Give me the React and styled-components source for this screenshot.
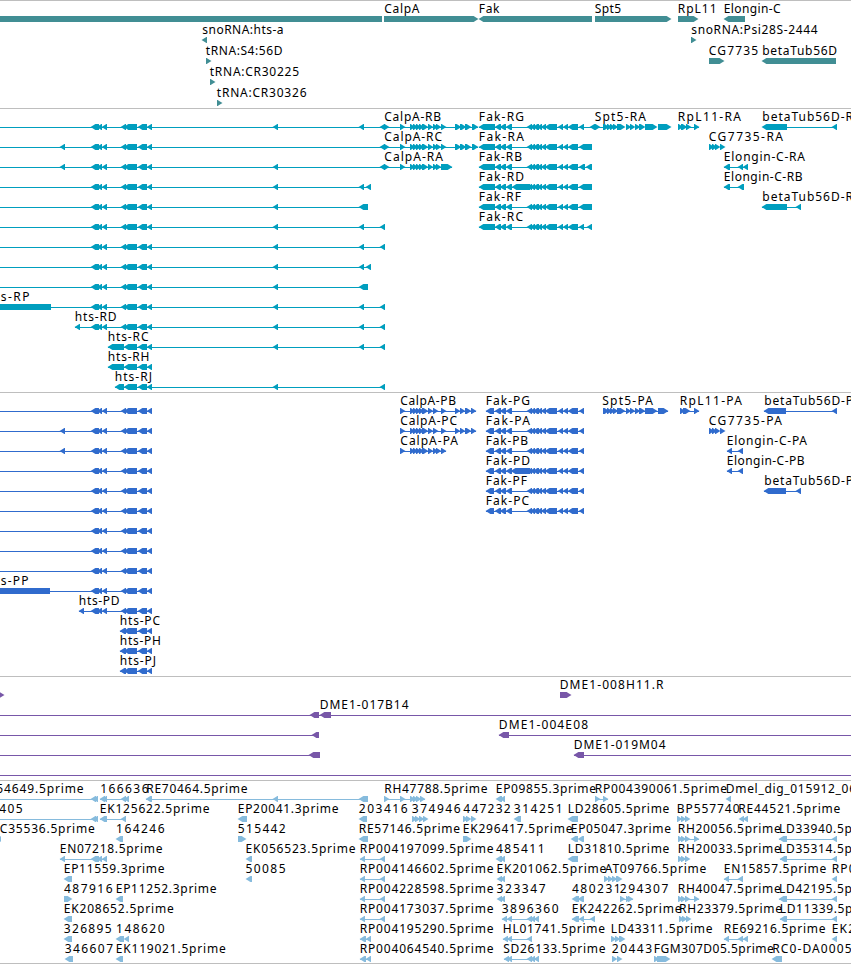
import styled, { createGlobalStyle } from "styled-components";

const GlobalStyle = createGlobalStyle`
  body {
    margin: 0;
    background-color: #ffffff;
    overflow: hidden;
  }
`;

const Browser = styled.main`
  display: flex;
  flex-direction: column;
  width: 851px;
  height: 964px;
  overflow: hidden;
  border-bottom: 1px solid #bebebe;
  box-sizing: border-box;
`;

const TrackSection = styled.section`
  display: flex;
  flex-direction: column;
  flex-shrink: 0;
  height: ${(props) => props.$height}px;
  box-sizing: border-box;
  border-top: 1px solid #bebebe;
  color: ${(props) => props.$color};
`;

const RowCanvas = styled.svg`
  display: block;
  flex-shrink: 0;
  width: 851px;
  height: ${(props) => props.$height}px;
  overflow: visible;
  fill: currentColor;
`;

const Label = styled.text`
  fill: #000000;
  font-family: "Noto Sans", sans-serif;
  font-size: 12px;
`;

// Feature notation: "-a:b" intron line, "=a:b" plain block,
// "<a:b" block on the minus strand, ">a:b" block on the plus strand.
const HTS_A = "<91:98 <94:99 <97:102 <102:107";
const HTS_B_END = "<124:137 <138:147 <147:152";
const HTS = `${HTS_A} <121:126 ${HTS_B_END}`;
const CALPA_MID =
  ">400:405 >410:415 >413:418 >416:421 >419:424 >422:428 >428:433 >433:438";
const CALPA_R = `-385:478 >384:389 ${CALPA_MID} >436:441 >441:446 >455:461 >460:466 >465:471 >472:478`;
const CALPA_P = `-400:476 ${CALPA_MID} >441:446 >455:460 >460:465 >465:471 >471:476`;
const FAK_MID = "<495:501 <500:506 <506:512";
const FAK_END =
  "<527:532 <530:535 <533:539 <537:542 <541:546 <545:557 <558:563 <563:568 <568:578";
const FAK_R = `-479:592 <479:495 ${FAK_MID} ${FAK_END}`;
const FAK_P = `-486:584 <486:494 ${FAK_MID} ${FAK_END} <579:584`;
const SPT5 =
  ">603:609 >607:612 >610:615 >613:618 >617:625 >626:631 >630:635 >635:640 >639:645 >645:657";
const CG7735 = ">709:714 >712:717 >715:720 >720:725";

const genes = [
  {
    f: "=0:382 >384:478 <479:592 >595:671 >678:698 <724:745",
    t: [
      ["CalpA", 384, 418.5],
      ["Fak", 478.5, 498.5],
      ["Spt5", 594.5, 620],
      ["RpL11", 677.5, 715.5],
      ["Elongin-C", 723.5, 779.5],
    ],
  },
  {
    f: "<202:207 >691:696",
    t: [
      ["snoRNA:hts-a", 202, 282.5],
      ["snoRNA:Psi28S-2444", 691, 816.5],
    ],
  },
  {
    f: ">206:211 >709:724 <762:836",
    t: [
      ["tRNA:S4:56D", 205.5, 281.5],
      ["CG7735", 708.5, 757],
      ["betaTub56D", 762, 836],
    ],
  },
  { f: ">210:215", t: [["tRNA:CR30225", 209.5, 298]] },
  { f: ">217:222", t: [["tRNA:CR30326", 216.5, 305.5]] },
];

const transcripts = [
  {
    f: `-0:385 ${HTS} <273:278 <359:364 <380:385 ${CALPA_R} ${FAK_R} <579:584 -592:603 <590:595 >595:600 ${SPT5} >658:671 -678:699 >678:683 >681:687 >686:691 >694:699 -787:837 <762:787 <832:837`,
    t: [
      ["CalpA-RB", 384, 440],
      ["Fak-RG", 478.5, 523],
      ["Spt5-RA", 594.5, 645],
      ["RpL11-RA", 677.5, 740],
      ["betaTub56D-R", 762, 852],
    ],
  },
  {
    f: `-0:385 <60:65 ${HTS} <380:385 ${CALPA_R} ${FAK_R} <579:592 ${CG7735}`,
    t: [
      ["CalpA-RC", 384, 441],
      ["Fak-RA", 478.5, 523],
      ["CG7735-RA", 708.5, 782],
    ],
  },
  {
    f: `-0:452 <60:65 ${HTS} <273:278 <380:385 >384:389 ${CALPA_MID} >436:441 >441:452 ${FAK_R} <579:585 <586:592 -724:748 <724:730 <738:743 <743:748`,
    t: [
      ["CalpA-RA", 384, 442],
      ["Fak-RB", 478.5, 521],
      ["Elongin-C-RA", 723.5, 804],
    ],
  },
  {
    f: `-0:371 ${HTS} <273:278 <359:364 <366:371 ${FAK_R} <512:530 <579:592 -724:744 <724:730 <738:744`,
    t: [
      ["Fak-RD", 478.5, 523],
      ["Elongin-C-RB", 723.5, 801.5],
    ],
  },
  {
    f: `-0:368 ${HTS} <273:278 <359:368 ${FAK_R} <579:592 -762:801 <762:787 <796:801`,
    t: [
      ["Fak-RF", 478.5, 520],
      ["betaTub56D-R", 762, 852],
    ],
  },
  {
    f: `-0:385 ${HTS} <273:278 <359:364 <380:385 ${FAK_R} <579:584 <587:592`,
    t: [["Fak-RC", 478.5, 522]],
  },
  { f: `-0:385 ${HTS} <273:278 <359:364 <380:385`, t: [] },
  { f: `-0:371 ${HTS} <273:278 <359:364 <366:371`, t: [] },
  { f: `-0:368 ${HTS} <273:278 <359:368`, t: [] },
  {
    f: `=0:51 -51:385 ${HTS} <273:278 <359:364 <380:385`,
    t: [["s-RP", 0.5, 28.5]],
  },
  {
    f: `-75:385 <75:80 ${HTS} <273:278 <359:364 <380:385`,
    t: [["hts-RD", 74.5, 115.5]],
  },
  {
    f: `-108:385 <108:124 ${HTS_B_END} <273:278 <359:364 <380:385`,
    t: [["hts-RC", 107.5, 147.5]],
  },
  { f: `-108:152 <108:124 ${HTS_B_END}`, t: [["hts-RH", 107.5, 148.5]] },
  {
    f: `-115:385 <115:124 ${HTS_B_END} <273:278 <380:385`,
    t: [["hts-RJ", 114.5, 151]],
  },
];

const proteins = [
  {
    f: `-0:152 ${HTS} ${CALPA_P} ${FAK_P} -603:668 ${SPT5} >658:668 -680:699 >680:685 >683:690 >694:699 -764:837 <764:786 <832:837`,
    t: [
      ["CalpA-PB", 400, 455],
      ["Fak-PG", 485.5, 529],
      ["Spt5-PA", 602, 652],
      ["RpL11-PA", 679.5, 741],
      ["betaTub56D-P", 764, 852],
    ],
  },
  {
    f: `-0:152 <60:65 ${HTS} ${CALPA_P} ${FAK_P} ${CG7735}`,
    t: [
      ["CalpA-PC", 400, 456],
      ["Fak-PA", 485.5, 529],
      ["CG7735-PA", 708.5, 781],
    ],
  },
  {
    f: `-0:152 <60:65 ${HTS} -400:446 ${CALPA_MID} >436:441 >441:446 ${FAK_P} -727:743 <727:732 <738:743`,
    t: [
      ["CalpA-PA", 400, 457],
      ["Fak-PB", 485.5, 527],
      ["Elongin-C-PA", 726.5, 806],
    ],
  },
  {
    f: `-0:152 ${HTS} ${FAK_P} <511:530 -727:743 <727:732 <738:743`,
    t: [
      ["Fak-PD", 485.5, 529],
      ["Elongin-C-PB", 726.5, 803.5],
    ],
  },
  {
    f: `-0:152 ${HTS} ${FAK_P} -764:801 <764:786 <796:801`,
    t: [
      ["Fak-PF", 485.5, 526],
      ["betaTub56D-P", 764, 852],
    ],
  },
  { f: `-0:152 ${HTS} ${FAK_P}`, t: [["Fak-PC", 485.5, 528]] },
  { f: `-0:152 ${HTS}`, t: [] },
  { f: `-0:152 ${HTS}`, t: [] },
  { f: `-0:152 ${HTS}`, t: [] },
  { f: `=0:50 -50:152 ${HTS}`, t: [["s-PP", 0.5, 27.5]] },
  { f: `-79:152 <79:84 ${HTS}`, t: [["hts-PD", 78.5, 118.5]] },
  { f: `-120:152 <120:126 ${HTS_B_END}`, t: [["hts-PC", 119.5, 159]] },
  { f: `-120:152 <120:126 ${HTS_B_END}`, t: [["hts-PH", 119.5, 160]] },
  { f: `-120:152 <120:126 ${HTS_B_END}`, t: [["hts-PJ", 119.5, 155]] },
];

const bacs = [
  { f: ">-6:4 >560:571", t: [["DME1-008H11.R", 559.5, 662.5]] },
  { f: "-0:851 <310:319 <320:331", t: [["DME1-017B14", 319.5, 407.5]] },
  {
    f: "-0:319 <312:319 -499:851 <499:509",
    t: [["DME1-004E08", 498.5, 587]],
  },
  {
    f: "-0:320 <309:320 -574:851 <574:584",
    t: [["DME1-019M04", 573.5, 664.5]],
  },
  { f: "-0:851", t: [] },
];

const RP_LONG = "-360:385 <360:365 <380:385";
const RH_SHORT = ">678:683 >681:686 >685:690";
const RH_LONG = `-678:699 ${RH_SHORT} >694:699`;

const ests = [
  {
    f: "-0:98 <91:96 <93:98 -100:129 <100:105 <102:107 <121:126 <124:129 -146:368 <146:152 <273:278 <359:368 -384:425 >384:389 >400:405 >410:415 >413:418 >416:421 >420:425 <496:502 <500:505 -595:608 >595:600 >603:608 <726:731",
    t: [
      ["54649.5prime", -4, 82.5],
      ["166636", 100, 147.5],
      ["RE70464.5prime", 146, 246.5],
      ["RH47788.5prime", 384, 486.5],
      ["EP09855.3prime", 495.5, 595],
      ["RP004390061.5prime", 594.5, 726],
      ["Dmel_dig_015912_06", 725.5, 855],
    ],
  },
  {
    f: "-0:98 <91:96 <93:98 -100:126 <100:107 <121:126 <238:247 <359:367 >412:417 >415:420 >419:424 >423:428 >463:468 >466:471 >471:476 <514:521 <568:578 >677:682 >681:686 >685:690 <739:744 <743:748",
    t: [
      ["405", -1, 21.5],
      ["EK125622.5prime", 99.5, 208.5],
      ["EP20041.3prime", 237.5, 337.5],
      ["203416", 358.5, 406.5],
      ["374946", 411.5, 459.5],
      ["447232", 463, 509.7],
      ["314251", 513.5, 561.5],
      ["LD28605.5prime", 567.5, 668.3],
      ["BP557740", 676.5, 738.5],
      ["RE44521.5prime", 738, 839.3],
    ],
  },
  {
    f: `<-3:1 <116:123 >238:246 <359:368 >463:471 <571:578 <578:584 ${RH_LONG} -779:837 <779:787 <832:837`,
    t: [
      ["C35536.5prime", -0.5, 93.7],
      ["164246", 115.8, 163.5],
      ["515442", 237.5, 284.7],
      ["RE57146.5prime", 358.5, 459],
      ["EK296417.5prime", 462.5, 571.5],
      ["EP05047.3prime", 570.5, 670],
      ["RH20056.5prime", 677.5, 779.8],
      ["LD33940.5prime", 778.8, 879.5],
    ],
  },
  {
    f: `-60:107 <60:65 ${HTS_A} <246:252 ${RP_LONG} <496:502 <500:505 <568:578 ${RH_SHORT} -780:837 <780:787 <832:837`,
    t: [
      ["EN07218.5prime", 59.5, 161.5],
      ["EK056523.5prime", 245.3, 354.5],
      ["RP004197099.5prime", 359.5, 492.5],
      ["485411", 495.7, 543.5],
      ["LD31810.5prime", 567.5, 668.3],
      ["RH20033.5prime", 677.5, 779.8],
      ["LD35314.5prime", 778.8, 879.5],
    ],
  },
  {
    f: `<64:72 <246:252 ${RP_LONG} <497:502 <500:505 >604:609 >608:613 >612:617 >616:622 -724:743 <724:729 <738:743 <832:837`,
    t: [
      ["EP11559.3prime", 63.5, 163.5],
      ["50085", 245.3, 284.5],
      ["RP004146602.5prime", 359.5, 492.5],
      ["EK201062.5prime", 496.3, 605.3],
      ["AT09766.5prime", 604.5, 705.3],
      ["EN15857.5prime", 723.5, 825.3],
      ["RP0", 831.5, 854.5],
    ],
  },
  {
    f: `>64:72 <116:123 ${RP_LONG} <497:502 <500:505 <572:579 <578:584 -620:633 >620:625 >626:631 >628:633 ${RH_LONG} -779:837 <779:787 <832:837`,
    t: [
      ["487916", 63.7, 111.5],
      ["EP11252.3prime", 115.5, 215.5],
      ["RP004228598.5prime", 359.5, 492.5],
      ["323347", 496.3, 544.5],
      ["480231", 571.7, 619.7],
      ["294307", 619.5, 667.3],
      ["RH40047.5prime", 677.5, 779.8],
      ["LD42195.5prime", 778.8, 879.5],
    ],
  },
  {
    f: `<64:72 ${RP_LONG} -502:539 <502:507 <507:512 <527:532 <530:535 <534:539 -572:595 <572:579 <579:584 <590:595 >679:684 >682:687 >686:691 -780:837 <780:787 <832:837`,
    t: [
      ["EK208652.5prime", 63.5, 172.7],
      ["RP004173037.5prime", 359.5, 492.5],
      ["3896360", 501.5, 557.5],
      ["EK242262.5prime", 571.5, 680.5],
      ["RH23379.5prime", 678.7, 781],
      ["LD11339.5prime", 779.5, 880],
    ],
  },
  {
    f: "<64:72 <116:124 <124:129 -360:371 <360:366 <366:371 -503:532 <503:508 <507:512 <527:532 >611:616 >615:620 >619:625 -724:748 <724:729 <738:743 <743:748 <832:837",
    t: [
      ["326895", 63.5, 110.5],
      ["148620", 115.8, 163.5],
      ["RP004195290.5prime", 359.5, 492.5],
      ["HL01741.5prime", 502.5, 604],
      ["LD43311.5prime", 610.5, 711.5],
      ["RE69216.5prime", 723.5, 824.5],
      ["EK2", 831.5, 854],
    ],
  },
  {
    f: "<65:73 <116:123 -360:371 <360:366 <366:371 -504:539 <504:509 <507:512 <527:532 <530:535 <534:539 >612:617 >617:622 >654:659 >657:670 <772:782",
    t: [
      ["346607", 64.5, 112],
      ["EK119021.5prime", 115.5, 224.7],
      ["RP004064540.5prime", 359.5, 492.5],
      ["SD26133.5prime", 503, 604.5],
      ["20443", 611.5, 651],
      ["FGM307D05.5prime", 653.5, 772.8],
      ["RC0-DA0005", 772, 850.5],
    ],
  },
];

const TRACKS = [
  { name: "genes", color: "#418e94", height: 108, pitch: 21, rows: genes },
  {
    name: "transcripts",
    color: "#009ebe",
    height: 284,
    pitch: 20,
    rows: transcripts,
  },
  {
    name: "proteins",
    color: "#306bcd",
    height: 284,
    pitch: 20,
    rows: proteins,
  },
  { name: "bacs", color: "#7857a8", height: 104, pitch: 20, rows: bacs },
  { name: "ests", color: "#86bbdd", height: 183, pitch: 20, rows: ests },
];

const Feature = ({ code }) => {
  const kind = code[0];
  const [a, b] = code.slice(1).split(":").map(Number);

  if (kind === "-") {
    return <rect x={a} y={18} width={b - a} height={1} />;
  }
  if (kind === "=") {
    return <rect x={a} y={15} width={b - a} height={6} />;
  }
  const dir = kind === "<" ? 1 : -1;
  const tip = kind === "<" ? a : b;
  const tail = kind === "<" ? b : a;
  const mid = tip + 2 * dir;
  const neck = tip + Math.min(4.4, b - a) * dir;
  return (
    <polygon
      points={`${tip - 0.5 * dir},18 ${mid},16.4 ${neck},15 ${tail},15 ${tail},21 ${neck},21 ${mid},19.6`}
    />
  );
};

const Row = ({ row, pitch }) => {
  return (
    <RowCanvas $height={pitch}>
      {row.f.split(" ").map((code, i) => (
        <Feature key={i} code={code} />
      ))}
      {row.t.map(([text, x, end]) => (
        <Label key={text} x={x + 0.3} y={12} textLength={end - x + 0.7}>
          {text}
        </Label>
      ))}
    </RowCanvas>
  );
};

const App = () => {
  return (
    <>
      <GlobalStyle />
      <Browser>
        {TRACKS.map((track) => (
          <TrackSection
            key={track.name}
            $height={track.height}
            $color={track.color}
          >
            {track.rows.map((row, i) => (
              <Row key={i} row={row} pitch={track.pitch} />
            ))}
          </TrackSection>
        ))}
      </Browser>
    </>
  );
};

export default App;
